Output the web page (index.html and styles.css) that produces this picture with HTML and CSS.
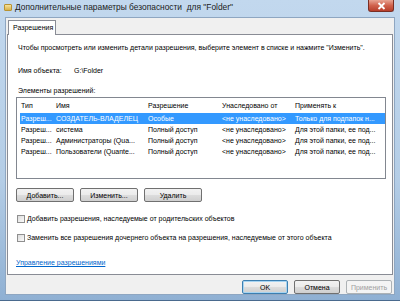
FILE: index.html
```html
<!DOCTYPE html>
<html lang="ru">
<head>
  <meta charset="UTF-8" />
  <title>Дополнительные параметры безопасности</title>
  <link rel="stylesheet" href="styles.css">
</head>
<body>
  <div class="window">
    <div class="titlebar">
      <span class="folder-icon"></span>
      <span class="title">Дополнительные параметры безопасности  для "Folder"</span>
      <span class="close">
        <svg width="9" height="8" viewBox="0 0 9 8"><path d="M1.5 1 L7.5 7 M7.5 1 L1.5 7" stroke="#fff" stroke-width="1.8"/></svg>
      </span>
    </div>

    <div class="body">
      <div class="tabs">
        <div class="tab">Разрешения</div>
      </div>

      <div class="panel">
        <p class="hint">Чтобы просмотреть или изменить детали разрешения, выберите элемент в списке и нажмите "Изменить".</p>

        <div class="object">
          <span class="label">Имя объекта:</span>
          <span>G:\Folder</span>
        </div>

        <div class="caption">Элементы разрешений:</div>

        <div class="list">
          <div class="row head">
            <span class="c1">Тип</span>
            <span class="c2">Имя</span>
            <span class="c3">Разрешение</span>
            <span class="c4">Унаследовано от</span>
            <span class="c5">Применять к</span>
          </div>
          <div class="row selected">
            <span class="c1">Разреш...</span>
            <span class="c2">СОЗДАТЕЛЬ-ВЛАДЕЛЕЦ</span>
            <span class="c3">Особые</span>
            <span class="c4">&lt;не унаследовано&gt;</span>
            <span class="c5">Только для подпапок н...</span>
          </div>
          <div class="row">
            <span class="c1">Разреш...</span>
            <span class="c2">система</span>
            <span class="c3">Полный доступ</span>
            <span class="c4">&lt;не унаследовано&gt;</span>
            <span class="c5">Для этой папки, ее под...</span>
          </div>
          <div class="row">
            <span class="c1">Разреш...</span>
            <span class="c2">Администраторы (Qua...</span>
            <span class="c3">Полный доступ</span>
            <span class="c4">&lt;не унаследовано&gt;</span>
            <span class="c5">Для этой папки, ее под...</span>
          </div>
          <div class="row">
            <span class="c1">Разреш...</span>
            <span class="c2">Пользователи (Quante...</span>
            <span class="c3">Полный доступ</span>
            <span class="c4">&lt;не унаследовано&gt;</span>
            <span class="c5">Для этой папки, ее под...</span>
          </div>
        </div>

        <div class="actions">
          <button>Добавить...</button>
          <button>Изменить...</button>
          <button>Удалить</button>
        </div>

        <label class="check"><span class="box"></span>Добавить разрешения, наследуемые от родительских объектов</label>
        <label class="check second"><span class="box"></span>Заменить все разрешения дочернего объекта на разрешения, наследуемые от этого объекта</label>

        <a class="link" href="#">Управление разрешениями</a>
      </div>

      <div class="footer">
        <button class="default">OK</button>
        <button>Отмена</button>
        <button disabled>Применить</button>
      </div>
    </div>
  </div>
</body>
</html>
```

FILE: styles.css
```css
* {
  box-sizing: border-box;
}
body {
  margin: 0;
  font-family: 'Liberation Sans', Arial, sans-serif;
  font-size: 7px;
  color: #000;
}
.window {
  width: 400px;
  height: 301px;
  background: linear-gradient(to bottom, #c2d8ee 0%, #b4cde6 60%, #8fb0d3 100%);
  display: flex;
  flex-direction: column;
  padding: 0 5px 5px 5px;
  border-bottom: 1px solid #4a6a8e;
}
.titlebar {
  height: 17px;
  display: flex;
  align-items: flex-start;
  padding-top: 2px;
  position: relative;
}
.folder-icon {
  width: 8px;
  height: 7px;
  margin: 2px 3px 0 -1px;
  background: linear-gradient(to bottom, #f7e29a, #d8b24a);
  border: 1px solid #b89332;
  border-radius: 1px;
}
.title {
  font-size: 8.4px;
  color: #1b1b1b;
  white-space: pre;
  line-height: 11px;
}
.close {
  position: absolute;
  right: 1px;
  top: 0;
  width: 26px;
  height: 12px;
  border-radius: 0 0 3px 3px;
  background: linear-gradient(to bottom, #e8a493 0%, #d0624d 50%, #b73e2b 100%);
  border: 1px solid #7a2e24;
  border-top: none;
  display: flex;
  align-items: center;
  justify-content: center;
}
.body {
  flex: 1;
  background: #f0f0f0;
  border: 1px solid #8ea6c1;
  display: flex;
  flex-direction: column;
  padding: 1px 1px 0 1px;
}
.tabs {
  display: flex;
  padding-left: 1px;
  height: 15px;
  align-items: flex-end;
}
.tab {
  background: #fff;
  border: 1px solid #898c95;
  border-bottom: none;
  height: 15px;
  padding: 3px 6px 0 4px;
  width: 48px;
  margin-bottom: -1px;
  position: relative;
}
.panel {
  background: #fff;
  border: 1px solid #898c95;
  height: 241px;
  padding: 0 8px 0 8px;
  display: flex;
  flex-direction: column;
}
.hint {
  margin: 8px 0 0 2px;
  line-height: 10px;
  white-space: nowrap;
}
.object {
  margin: 13px 0 0 2px;
  display: flex;
  line-height: 10px;
}
.label {
  width: 56px;
}
.caption {
  margin: 10px 0 0 2px;
  line-height: 10px;
}
.list {
  margin-top: 1px;
  border: 1px solid #828790;
  height: 82px;
  width: 370px;
  padding: 2px 0 0 3px;
}
.row {
  display: flex;
  height: 11px;
  line-height: 11px;
  white-space: nowrap;
  color: #000;
}
.row.head {
  height: 13px;
  line-height: 12px;
}
.row.selected {
  background: #3399ff;
  color: #fff;
}
.c1 { width: 36px; padding-left: 1px; }
.c2 { width: 92px; }
.c3 { width: 74px; }
.c4 { width: 73px; }
.c5 { flex: 1; }
.actions {
  display: flex;
  gap: 6px;
  margin-top: 9px;
}
button {
  font-family: inherit;
  font-size: 7px;
  height: 14px;
  padding: 0;
  border: 1px solid #707070;
  border-radius: 2px;
  background: linear-gradient(to bottom, #f2f2f2 0%, #ebebeb 50%, #dddddd 51%, #cfcfcf 100%);
  color: #000;
}
.actions button {
  width: 58px;
}
.check {
  display: flex;
  align-items: center;
  margin: 12px 0 0 1px;
  line-height: 10px;
}
.check.second {
  margin-top: 9px;
}
.box {
  width: 8px;
  height: 8px;
  border: 1px solid #8f8f8f;
  background: linear-gradient(to bottom right, #dcdcdc, #fbfbfb);
  margin-right: 2px;
}
.link {
  margin-top: 15px;
  color: #0066cc;
  line-height: 10px;
  align-self: flex-start;
}
.footer {
  display: flex;
  justify-content: flex-end;
  gap: 6px;
  padding: 5px 1px 0 0;
}
.footer button {
  width: 46px;
}
.footer button.default {
  border-color: #3c7fb1;
  box-shadow: inset 0 0 0 1px #a6d4f2;
}
.footer button:disabled {
  color: #a0a0a0;
  border-color: #adb2b5;
  background: #f4f4f4;
}
```
